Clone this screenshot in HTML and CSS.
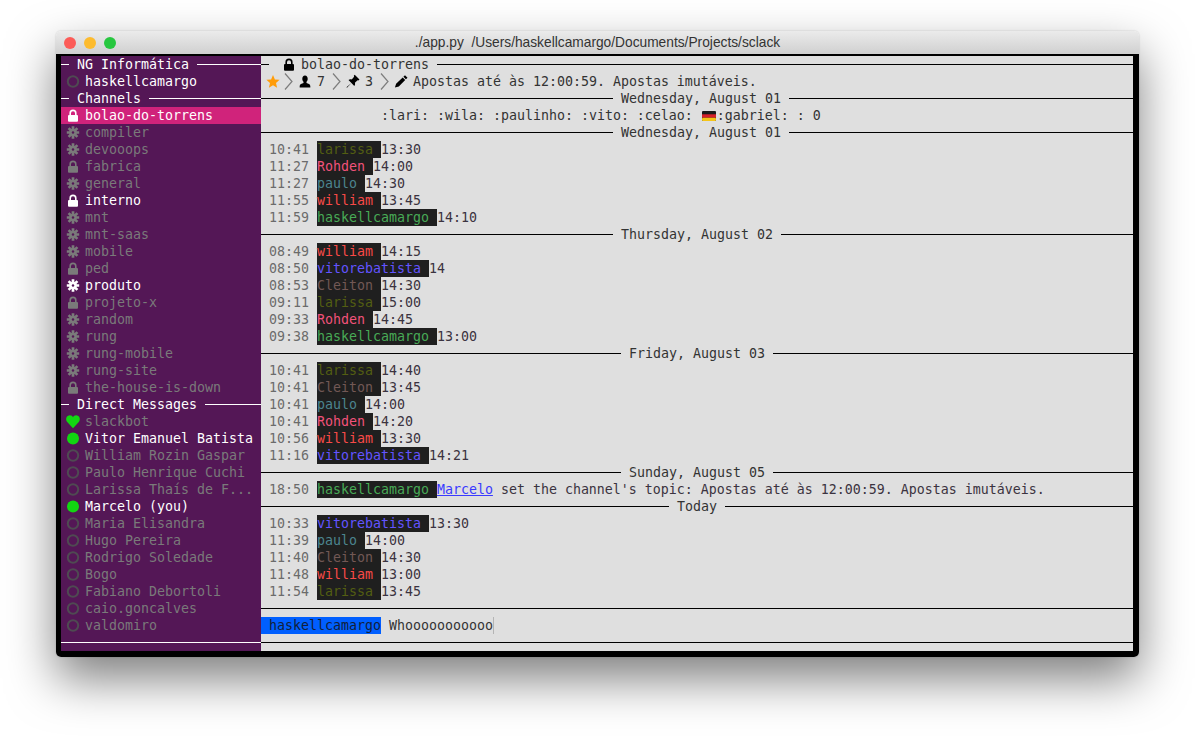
FILE: index.html
```html
<!DOCTYPE html>
<html lang="pt">
<head>
    <meta charset="UTF-8">
    <meta name="viewport" content="width=device-width, initial-scale=1.0">
    <title>sclack</title>
    <link rel="stylesheet" href="styles.css">
</head>
<body>
    <svg class="defs" width="0" height="0">
        <defs>
            <symbol id="i-lock" viewBox="0 0 16 17">
                <path d="M5.200 8.500V6.200a2.800 2.800 0 0 1 5.600 0v2.300" fill="none" stroke="currentColor" stroke-width="1.600"/>
                <rect x="3" y="8" width="10" height="6.800" rx="1" fill="currentColor"/>
            </symbol>
            <symbol id="i-gear" viewBox="0 0 16 17">
                <g stroke="currentColor" stroke-width="2.700">
                    <path d="M8 2.300v12.400M1.800 8.500h12.400M3.600 4.100l8.800 8.800M12.400 4.100l-8.800 8.800"/>
                </g>
                <circle cx="8" cy="8.500" r="3.700" fill="currentColor"/>
                <circle cx="8" cy="8.500" r="1.200" fill="#541756"/>
            </symbol>
            <symbol id="i-away" viewBox="0 0 16 17">
                <circle cx="8" cy="8.500" r="5.200" fill="none" stroke="#4f4a52" stroke-width="2"/>
            </symbol>
            <symbol id="i-online" viewBox="0 0 16 17">
                <circle cx="8" cy="8.500" r="6" fill="#12d612"/>
            </symbol>
            <symbol id="i-heart" viewBox="0 0 16 17">
                <path d="M8 15.200L2.200 9C0 6 1.600 2.200 4.900 2.200C6.400 2.200 7.500 3 8 4.200C8.500 3 9.600 2.200 11.100 2.200C14.400 2.200 16 6 13.800 9Z" fill="#12d612"/>
            </symbol>
            <symbol id="i-star" viewBox="0 0 16 17">
                <polygon points="8,2 9.900,6.400 14.600,6.800 11,10 12.100,14.700 8,12.200 3.900,14.700 5,10 1.400,6.800 6.100,6.400" fill="#ff9d0a"/>
            </symbol>
            <symbol id="i-chevron" viewBox="0 0 16 17">
                <polyline points="4,0.500 11,8.500 4,16.500" fill="none" stroke="#7d7d7d" stroke-width="1.200"/>
            </symbol>
            <symbol id="i-user" viewBox="0 0 16 17">
                <path d="M8 2.500c1.700 0 2.700 1.300 2.700 3.200c0 1.400-.5 2.500-1.200 3.100v1.300c1.600.7 3.800 1.300 3.800 2.800v1.600H2.700v-1.600c0-1.500 2.200-2.100 3.800-2.800V8.800c-.7-.6-1.200-1.700-1.200-3.100C5.300 3.800 6.300 2.500 8 2.500z" fill="#000"/>
            </symbol>
            <symbol id="i-pin" viewBox="0 0 16 17">
                <path d="M9.700 1.800l4.800 4.800-1.100.9-.8-.3-2.700 2.500c.4 1.300.1 2.400-.6 3.200L6.400 9.900 2 14.800l-.5-.5 4.900-4.400L3.500 7c.9-.8 2-1 3.200-.6L9.100 3.700l-.3-.9z" fill="#000"/>
            </symbol>
            <symbol id="i-pencil" viewBox="0 0 16 17">
                <path d="M12 2.200l2.500 2.500-1.600 1.600-2.500-2.500zM9.700 4.500l2.500 2.500-6.400 6.400-3.900 1.200 1.200-3.900z" fill="#000"/>
            </symbol>
        </defs>
    </svg>

    <div class="window">
        <div class="titlebar">
            <div class="lights">
                <span class="light light-red"></span>
                <span class="light light-yellow"></span>
                <span class="light light-green"></span>
            </div>
            <div class="window-title">./app.py  /Users/haskellcamargo/Documents/Projects/sclack</div>
        </div>

        <div class="term">
            <!-- sidebar -->
            <div class="sidebar">
                <div class="rule rule-head"><span class="rule-line"></span><span class="rule-text">NG Informática</span><span class="rule-line"></span></div>
                <div class="item"><svg class="icon"><use href="#i-away"/></svg><span class="active">haskellcamargo</span></div>
                <div class="rule rule-head"><span class="rule-line"></span><span class="rule-text">Channels</span><span class="rule-line"></span></div>
                <div class="item item-selected active"><svg class="icon"><use href="#i-lock"/></svg><span>bolao-do-torrens</span></div>
                <div class="item"><svg class="icon"><use href="#i-gear"/></svg><span>compiler</span></div>
                <div class="item"><svg class="icon"><use href="#i-gear"/></svg><span>devooops</span></div>
                <div class="item"><svg class="icon"><use href="#i-lock"/></svg><span>fabrica</span></div>
                <div class="item"><svg class="icon"><use href="#i-gear"/></svg><span>general</span></div>
                <div class="item active"><svg class="icon"><use href="#i-lock"/></svg><span>interno</span></div>
                <div class="item"><svg class="icon"><use href="#i-gear"/></svg><span>mnt</span></div>
                <div class="item"><svg class="icon"><use href="#i-gear"/></svg><span>mnt-saas</span></div>
                <div class="item"><svg class="icon"><use href="#i-gear"/></svg><span>mobile</span></div>
                <div class="item"><svg class="icon"><use href="#i-lock"/></svg><span>ped</span></div>
                <div class="item active"><svg class="icon"><use href="#i-gear"/></svg><span>produto</span></div>
                <div class="item"><svg class="icon"><use href="#i-lock"/></svg><span>projeto-x</span></div>
                <div class="item"><svg class="icon"><use href="#i-gear"/></svg><span>random</span></div>
                <div class="item"><svg class="icon"><use href="#i-gear"/></svg><span>rung</span></div>
                <div class="item"><svg class="icon"><use href="#i-gear"/></svg><span>rung-mobile</span></div>
                <div class="item"><svg class="icon"><use href="#i-gear"/></svg><span>rung-site</span></div>
                <div class="item"><svg class="icon"><use href="#i-lock"/></svg><span>the-house-is-down</span></div>
                <div class="rule rule-head"><span class="rule-line"></span><span class="rule-text">Direct Messages</span><span class="rule-line"></span></div>
                <div class="item"><svg class="icon"><use href="#i-heart"/></svg><span>slackbot</span></div>
                <div class="item active"><svg class="icon"><use href="#i-online"/></svg><span>Vitor Emanuel Batista</span></div>
                <div class="item"><svg class="icon"><use href="#i-away"/></svg><span>William Rozin Gaspar</span></div>
                <div class="item"><svg class="icon"><use href="#i-away"/></svg><span>Paulo Henrique Cuchi</span></div>
                <div class="item"><svg class="icon"><use href="#i-away"/></svg><span>Larissa Thaís de F...</span></div>
                <div class="item active"><svg class="icon"><use href="#i-online"/></svg><span>Marcelo (you)</span></div>
                <div class="item"><svg class="icon"><use href="#i-away"/></svg><span>Maria Elisandra</span></div>
                <div class="item"><svg class="icon"><use href="#i-away"/></svg><span>Hugo Pereira</span></div>
                <div class="item"><svg class="icon"><use href="#i-away"/></svg><span>Rodrigo Soledade</span></div>
                <div class="item"><svg class="icon"><use href="#i-away"/></svg><span>Bogo</span></div>
                <div class="item"><svg class="icon"><use href="#i-away"/></svg><span>Fabiano Debortoli</span></div>
                <div class="item"><svg class="icon"><use href="#i-away"/></svg><span>caio.goncalves</span></div>
                <div class="item"><svg class="icon"><use href="#i-away"/></svg><span>valdomiro</span></div>
                <div class="rule"><span class="rule-line"></span></div>
            </div>

            <!-- channel -->
            <div class="main">
                <div class="rule rule-head"><span class="rule-line"></span><span class="rule-text channel-name"><svg class="icon icon-title"><use href="#i-lock"/></svg>bolao-do-torrens</span><span class="rule-line"></span></div>
                <div class="info">
                    <svg class="icon"><use href="#i-star"/></svg>
                    <svg class="icon"><use href="#i-chevron"/></svg>
                    <svg class="icon"><use href="#i-user"/></svg>
                    <span class="info-text">7</span>
                    <svg class="icon"><use href="#i-chevron"/></svg>
                    <svg class="icon"><use href="#i-pin"/></svg>
                    <span class="info-text">3</span>
                    <svg class="icon"><use href="#i-chevron"/></svg>
                    <svg class="icon"><use href="#i-pencil"/></svg>
                    <span class="info-text">Apostas até às 12:00:59. Apostas imutáveis.</span>
                </div>
                <div class="rule rule-shift"><span class="rule-line"></span><span class="rule-text">Wednesday, August 01</span><span class="rule-line"></span></div>
                <div class="reactions">:lari: :wila: :paulinho: :vito: :celao: <svg class="flag" viewBox="0 0 14 10"><rect width="14" height="10" rx="1" fill="#1c1c1c"/><rect y="3.300" width="14" height="3.400" fill="#d8202a"/><rect y="6.700" width="14" height="3.300" rx="1" fill="#f5c518"/></svg>:gabriel: : 0</div>
                <div class="rule rule-shift"><span class="rule-line"></span><span class="rule-text">Wednesday, August 01</span><span class="rule-line"></span></div>

                <div class="msg"><span class="time">10:41</span><span class="who larissa">larissa </span>13:30</div>
                <div class="msg"><span class="time">11:27</span><span class="who rohden">Rohden </span>14:00</div>
                <div class="msg"><span class="time">11:27</span><span class="who paulo">paulo </span>14:30</div>
                <div class="msg"><span class="time">11:55</span><span class="who william">william </span>13:45</div>
                <div class="msg"><span class="time">11:59</span><span class="who haskell">haskellcamargo </span>14:10</div>

                <div class="rule"><span class="rule-line"></span><span class="rule-text">Thursday, August 02</span><span class="rule-line"></span></div>
                <div class="msg"><span class="time">08:49</span><span class="who william">william </span>14:15</div>
                <div class="msg"><span class="time">08:50</span><span class="who vitor">vitorebatista </span>14</div>
                <div class="msg"><span class="time">08:53</span><span class="who cleiton">Cleiton </span>14:30</div>
                <div class="msg"><span class="time">09:11</span><span class="who larissa">larissa </span>15:00</div>
                <div class="msg"><span class="time">09:33</span><span class="who rohden">Rohden </span>14:45</div>
                <div class="msg"><span class="time">09:38</span><span class="who haskell">haskellcamargo </span>13:00</div>

                <div class="rule"><span class="rule-line"></span><span class="rule-text">Friday, August 03</span><span class="rule-line"></span></div>
                <div class="msg"><span class="time">10:41</span><span class="who larissa">larissa </span>14:40</div>
                <div class="msg"><span class="time">10:41</span><span class="who cleiton">Cleiton </span>13:45</div>
                <div class="msg"><span class="time">10:41</span><span class="who paulo">paulo </span>14:00</div>
                <div class="msg"><span class="time">10:41</span><span class="who rohden">Rohden </span>14:20</div>
                <div class="msg"><span class="time">10:56</span><span class="who william">william </span>13:30</div>
                <div class="msg"><span class="time">11:16</span><span class="who vitor">vitorebatista </span>14:21</div>

                <div class="rule"><span class="rule-line"></span><span class="rule-text">Sunday, August 05</span><span class="rule-line"></span></div>
                <div class="msg"><span class="time">18:50</span><span class="who haskell">haskellcamargo </span><a class="mention">Marcelo</a> set the channel's topic: Apostas até às 12:00:59. Apostas imutáveis.</div>

                <div class="rule"><span class="rule-line"></span><span class="rule-text">Today</span><span class="rule-line"></span></div>
                <div class="msg"><span class="time">10:33</span><span class="who vitor">vitorebatista </span>13:30</div>
                <div class="msg"><span class="time">11:39</span><span class="who paulo">paulo </span>14:00</div>
                <div class="msg"><span class="time">11:40</span><span class="who cleiton">Cleiton </span>14:30</div>
                <div class="msg"><span class="time">11:48</span><span class="who william">william </span>13:00</div>
                <div class="msg"><span class="time">11:54</span><span class="who larissa">larissa </span>13:45</div>

                <div class="rule"><span class="rule-line"></span></div>
                <div class="compose"><span class="compose-user">haskellcamargo</span><span class="compose-text">Whooooooooooo</span></div>
                <div class="rule"><span class="rule-line"></span></div>
            </div>
        </div>
    </div>
</body>
</html>
```

FILE: styles.css
```css
html, body {
    margin: 0;
    padding: 0;
    background-color: #fff;
}

body {
    padding: 31px 56px 0;
    height: 737px;
    overflow: hidden;
    box-sizing: border-box;
}

.defs {
    position: absolute;
}

.window {
    width: 1083px;
    height: 626px;
    border-radius: 5px;
    box-shadow: 0 22px 48px rgba(0, 0, 0, 0.5), 0 0 2px rgba(0, 0, 0, 0.2);
    display: flex;
    flex-direction: column;
}

.titlebar {
    height: 23px;
    flex: none;
    display: flex;
    align-items: center;
    background: linear-gradient(#ebebeb, #d0d0d0);
    border-radius: 5px 5px 0 0;
    position: relative;
}

.lights {
    display: flex;
    gap: 8px;
    padding-left: 8px;
}

.light {
    width: 12px;
    height: 12px;
    border-radius: 50%;
}

.light-red {
    background-color: #fc5b57;
}

.light-yellow {
    background-color: #fdbb2e;
}

.light-green {
    background-color: #27c73f;
}

.window-title {
    flex: 1;
    margin-left: -60px;
    text-align: center;
    white-space: pre;
    font: 13.75px "Liberation Sans", Arial, sans-serif;
    color: #333;
}

.term {
    flex: 1;
    display: flex;
    background-color: #000;
    padding: 2px 6px 6px 5px;
    border-radius: 0 0 5px 5px;
    font-family: "DejaVu Sans Mono", monospace;
    font-size: 13.29px;
    line-height: 17px;
}

/* sidebar */
.sidebar {
    width: 200px;
    background-color: #541756;
    color: #7a7a7a;
}

.item {
    height: 17px;
    display: flex;
    align-items: center;
    padding-left: 4px;
    white-space: pre;
}

.item .icon {
    margin-right: 4px;
}

.active {
    color: #fff;
}

.item-selected {
    background-color: #d0237b;
}

.icon {
    width: 16px;
    height: 17px;
    flex: none;
}

/* rules */
.rule {
    height: 17px;
    display: flex;
    align-items: center;
    color: #000;
}

.sidebar .rule {
    color: #fff;
}

.main .rule-text {
    color: #333;
}

.rule-line {
    flex: 1 1 0;
    border-top: 1px solid currentColor;
}

.rule-text {
    padding: 0 8px;
    display: flex;
    align-items: center;
    white-space: pre;
}

.rule-head .rule-line:first-child {
    flex: 0 0 8px;
}

.rule-shift .rule-line:first-child {
    flex-basis: 8px;
}

/* channel */
.main {
    width: 872px;
    background-color: #dfdfdf;
    color: #333;
}

.channel-name {
    padding-left: 12px;
}

.icon-title {
    color: #000;
    margin-right: 4px;
}

.info {
    height: 17px;
    display: flex;
    align-items: center;
    padding-left: 4px;
    white-space: pre;
}

.info-text {
    margin: 0 4px;
}

.reactions {
    height: 17px;
    padding-left: 120px;
    white-space: pre;
}

.flag {
    width: 14px;
    height: 10px;
    margin: 0 1px;
    vertical-align: -1px;
}

.msg {
    height: 17px;
    padding-left: 8px;
    color: #3b3340;
    white-space: pre;
}

.time {
    color: #6b6b6b;
    margin-right: 8px;
}

.who {
    display: inline-block;
    height: 17px;
    background-color: #1f1f1f;
}

.larissa {
    color: #535e12;
}

.rohden {
    color: #f2527a;
}

.paulo {
    color: #4c858f;
}

.william {
    color: #f84a48;
}

.haskell {
    color: #48aa56;
}

.vitor {
    color: #6354ff;
}

.cleiton {
    color: #725855;
}

.mention {
    color: #3a3aff;
    text-decoration: underline;
}

.compose {
    height: 17px;
    display: flex;
    white-space: pre;
}

.compose-user {
    background-color: #005fff;
    color: #12203a;
    padding: 0 0 0 8px;
}

.compose-text {
    margin-left: 8px;
    border-right: 1px solid #b4b4b4;
}
```
